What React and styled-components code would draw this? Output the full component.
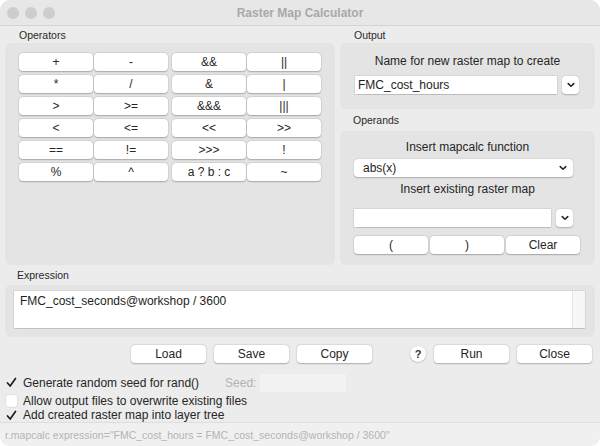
import styled, { createGlobalStyle } from "styled-components";

const GlobalStyle = createGlobalStyle`
  html, body {
    margin: 0;
    padding: 0;
    background: #ffffff;
  }
  * {
    box-sizing: border-box;
  }
`;

//styled-component
const Window = styled.div`
  width: 600px;
  height: 446px;
  display: flex;
  flex-direction: column;
  background: #ececec;
  border-radius: 10px;
  overflow: hidden;
  font-family: "Liberation Sans", Arial, sans-serif;
  font-size: 12px;
  color: #262626;
`;

const TitleBar = styled.div`
  height: 26px;
  flex: none;
  display: grid;
  grid-template-columns: 1fr auto 1fr;
  align-items: center;
  background: #e7e7e7;
  border-bottom: 1px solid #d4d4d4;
`;

const Lights = styled.div`
  display: flex;
  gap: 6px;
  padding-left: 7px;
`;

const Light = styled.span`
  width: 12px;
  height: 12px;
  border-radius: 50%;
  background: #cdcdcd;
`;

const Title = styled.div`
  font-weight: bold;
  font-size: 12px;
  color: #a9a9a9;
`;

const Content = styled.div`
  padding: 0 5px;
  display: flex;
  flex-direction: column;
`;

const TopRow = styled.div`
  display: grid;
  grid-template-columns: 330px 1fr;
  column-gap: 5px;
`;

const Column = styled.div`
  display: flex;
  flex-direction: column;
`;

const SectionLabel = styled.div`
  height: ${(p) => p.h || 17}px;
  display: flex;
  align-items: center;
  padding-left: ${(p) => p.indent || 14}px;
  font-size: 10.5px;
  color: #2a2a2a;
`;

const Panel = styled.div`
  height: ${(p) => p.h}px;
  background: #e4e4e4;
  border-radius: 6px;
  padding: ${(p) => p.pad || "0"};
  display: flex;
  flex-direction: column;
`;

const OpGroups = styled.div`
  display: flex;
  gap: 4px;
`;

const OpGrid = styled.div`
  display: grid;
  grid-template-columns: 74px 74px;
  column-gap: 1px;
  row-gap: 4px;
`;

const Btn = styled.div`
  width: ${(p) => p.w || 74}px;
  height: 18px;
  background: #ffffff;
  border-radius: 4px;
  box-shadow: 0 0.5px 1.5px rgba(0, 0, 0, 0.25), 0 0 0 0.5px rgba(0, 0, 0, 0.06);
  display: flex;
  align-items: center;
  justify-content: center;
  font-size: 12px;
  color: #262626;
  flex: none;
`;

const CenterLabel = styled.div`
  height: 18px;
  display: flex;
  align-items: center;
  justify-content: center;
  font-size: 12px;
  color: #262626;
  margin-top: ${(p) => p.mt || 0}px;
`;

const FieldRow = styled.div`
  display: flex;
  align-items: center;
  gap: ${(p) => p.gap || 5}px;
  margin-top: ${(p) => p.mt || 0}px;
`;

const TextField = styled.div`
  width: ${(p) => p.w}px;
  height: 18px;
  background: #ffffff;
  box-shadow: 0 0 0 0.5px rgba(0, 0, 0, 0.12), 0 0.5px 1px rgba(0, 0, 0, 0.12);
  display: flex;
  align-items: center;
  padding-left: 3px;
  font-size: 12px;
  color: #1e1e1e;
`;

const DropBtn = styled.div`
  width: 17px;
  height: 18px;
  background: #ffffff;
  border-radius: 4px;
  box-shadow: 0 0.5px 1.5px rgba(0, 0, 0, 0.25);
  display: flex;
  align-items: center;
  justify-content: center;
`;

const Select = styled.div`
  width: 219px;
  height: 18px;
  background: #ffffff;
  border-radius: 4px;
  box-shadow: 0 0.5px 1.5px rgba(0, 0, 0, 0.25);
  display: flex;
  align-items: center;
  justify-content: space-between;
  padding: 0 6px 0 9px;
  font-size: 12px;
  color: #1e1e1e;
`;

const TextArea = styled.div`
  height: 37px;
  background: #ffffff;
  box-shadow: 0 0 0 0.5px rgba(0, 0, 0, 0.12), 0 0.5px 1px rgba(0, 0, 0, 0.1);
  display: flex;
`;

const AreaText = styled.div`
  flex: 1;
  padding: 3px 6px;
  font-size: 12px;
  color: #1e1e1e;
`;

const ScrollStrip = styled.div`
  width: 13px;
  background: #f7f7f7;
  border-left: 1px solid #e3e3e3;
`;

const ButtonRow = styled.div`
  display: flex;
  justify-content: flex-end;
  align-items: center;
  gap: 8px;
  margin-top: 8px;
  padding-right: 3px;
`;

const HelpBtn = styled.div`
  width: 16px;
  height: 16px;
  border-radius: 50%;
  background: #ffffff;
  box-shadow: 0 0.5px 1.5px rgba(0, 0, 0, 0.3);
  display: flex;
  align-items: center;
  justify-content: center;
  font-size: 11px;
  font-weight: bold;
  color: #333;
  margin-left: 30px;
`;

const Options = styled.div`
  display: flex;
  flex-direction: column;
  margin-top: 9px;
  padding-left: 6px;
`;

const CheckRow = styled.div`
  height: ${(p) => p.h || 15}px;
  display: flex;
  align-items: center;
  gap: 6px;
  font-size: 12px;
  color: #262626;
`;

const Box = styled.div`
  width: 11px;
  height: 12px;
  display: flex;
  align-items: center;
  justify-content: center;
  background: ${(p) => (p.checked ? "transparent" : "#ffffff")};
  border-radius: 3px;
  box-shadow: ${(p) =>
    p.checked ? "none" : "0 0 0 0.5px rgba(0, 0, 0, 0.1)"};
`;

const SeedLabel = styled.span`
  color: #b3b3b3;
  margin-left: 20px;
`;

const SeedField = styled.div`
  width: 86px;
  height: 18px;
  background: #f2f2f2;
  margin-left: -2px;
`;

const StatusBar = styled.div`
  margin-top: auto;
  height: 24px;
  flex: none;
  display: flex;
  align-items: center;
  padding-left: 5px;
  background: #f0f0f0;
  border-top: 1px solid #dedede;
  border-radius: 0 0 10px 10px;
  font-size: 10.5px;
  color: #b4b4b4;
`;

const Chevron = () => (
  <svg width="8" height="6" viewBox="0 0 8 6">
    <path
      d="M1.2 1.6 L4 4.3 L6.8 1.6"
      fill="none"
      stroke="#222"
      strokeWidth="1.5"
      strokeLinecap="round"
      strokeLinejoin="round"
    />
  </svg>
);

const Check = () => (
  <svg width="11" height="11" viewBox="0 0 11 11">
    <path
      d="M1.5 6 L4.2 9 L9.5 1.5"
      fill="none"
      stroke="#1e1e1e"
      strokeWidth="1.7"
      strokeLinecap="round"
      strokeLinejoin="round"
    />
  </svg>
);

const leftOps = ["+", "-", "*", "/", ">", ">=", "<", "<=", "==", "!=", "%", "^"];
const rightOps = ["&&", "||", "&", "|", "&&&", "|||", "<<", ">>", ">>>", "!", "a ? b : c", "~"];

function App() {
  return (
    <Window>
      <GlobalStyle />
      <TitleBar>
        <Lights>
          <Light />
          <Light />
          <Light />
        </Lights>
        <Title>Raster Map Calculator</Title>
        <div />
      </TitleBar>
      <Content>
        <TopRow>
          <Column>
            <SectionLabel>Operators</SectionLabel>
            <Panel h={222} pad="10px 14px">
              <OpGroups>
                <OpGrid>
                  {leftOps.map((o) => (
                    <Btn key={o}>{o}</Btn>
                  ))}
                </OpGrid>
                <OpGrid>
                  {rightOps.map((o) => (
                    <Btn key={o}>{o}</Btn>
                  ))}
                </OpGrid>
              </OpGroups>
            </Panel>
          </Column>
          <Column>
            <SectionLabel>Output</SectionLabel>
            <Panel h={66} pad="9px 15px 0 15px">
              <CenterLabel>Name for new raster map to create</CenterLabel>
              <FieldRow mt={6}>
                <TextField w={202}>FMC_cost_hours</TextField>
                <DropBtn>
                  <Chevron />
                </DropBtn>
              </FieldRow>
            </Panel>
            <SectionLabel h={22} indent={13}>
              Operands
            </SectionLabel>
            <Panel h={134} pad="7px 14px 0 14px">
              <CenterLabel>Insert mapcalc function</CenterLabel>
              <FieldRow mt={3}>
                <Select>
                  abs(x)
                  <Chevron />
                </Select>
              </FieldRow>
              <CenterLabel mt={3}>Insert existing raster map</CenterLabel>
              <FieldRow mt={11}>
                <TextField w={197} />
                <DropBtn>
                  <Chevron />
                </DropBtn>
              </FieldRow>
              <FieldRow mt={9} gap={2}>
                <Btn>(</Btn>
                <Btn>)</Btn>
                <Btn>Clear</Btn>
              </FieldRow>
            </Panel>
          </Column>
        </TopRow>
        <SectionLabel h={20} indent={12}>
          Expression
        </SectionLabel>
        <Panel h={52} pad="6px 10px 0 9px">
          <TextArea>
            <AreaText>FMC_cost_seconds@workshop / 3600</AreaText>
            <ScrollStrip />
          </TextArea>
        </Panel>
        <ButtonRow>
          <Btn w={75}>Load</Btn>
          <Btn w={75}>Save</Btn>
          <Btn w={75}>Copy</Btn>
          <HelpBtn>?</HelpBtn>
          <Btn w={75}>Run</Btn>
          <Btn w={75}>Close</Btn>
        </ButtonRow>
      </Content>
      <Options>
        <CheckRow h={21}>
          <Box checked>
            <Check />
          </Box>
          Generate random seed for rand()
          <SeedLabel>Seed:</SeedLabel>
          <SeedField />
        </CheckRow>
        <CheckRow>
          <Box />
          Allow output files to overwrite existing files
        </CheckRow>
        <CheckRow h={14}>
          <Box checked>
            <Check />
          </Box>
          Add created raster map into layer tree
        </CheckRow>
      </Options>
      <StatusBar>
        r.mapcalc expression="FMC_cost_hours = FMC_cost_seconds@workshop / 3600"
      </StatusBar>
    </Window>
  );
}

export default App;
